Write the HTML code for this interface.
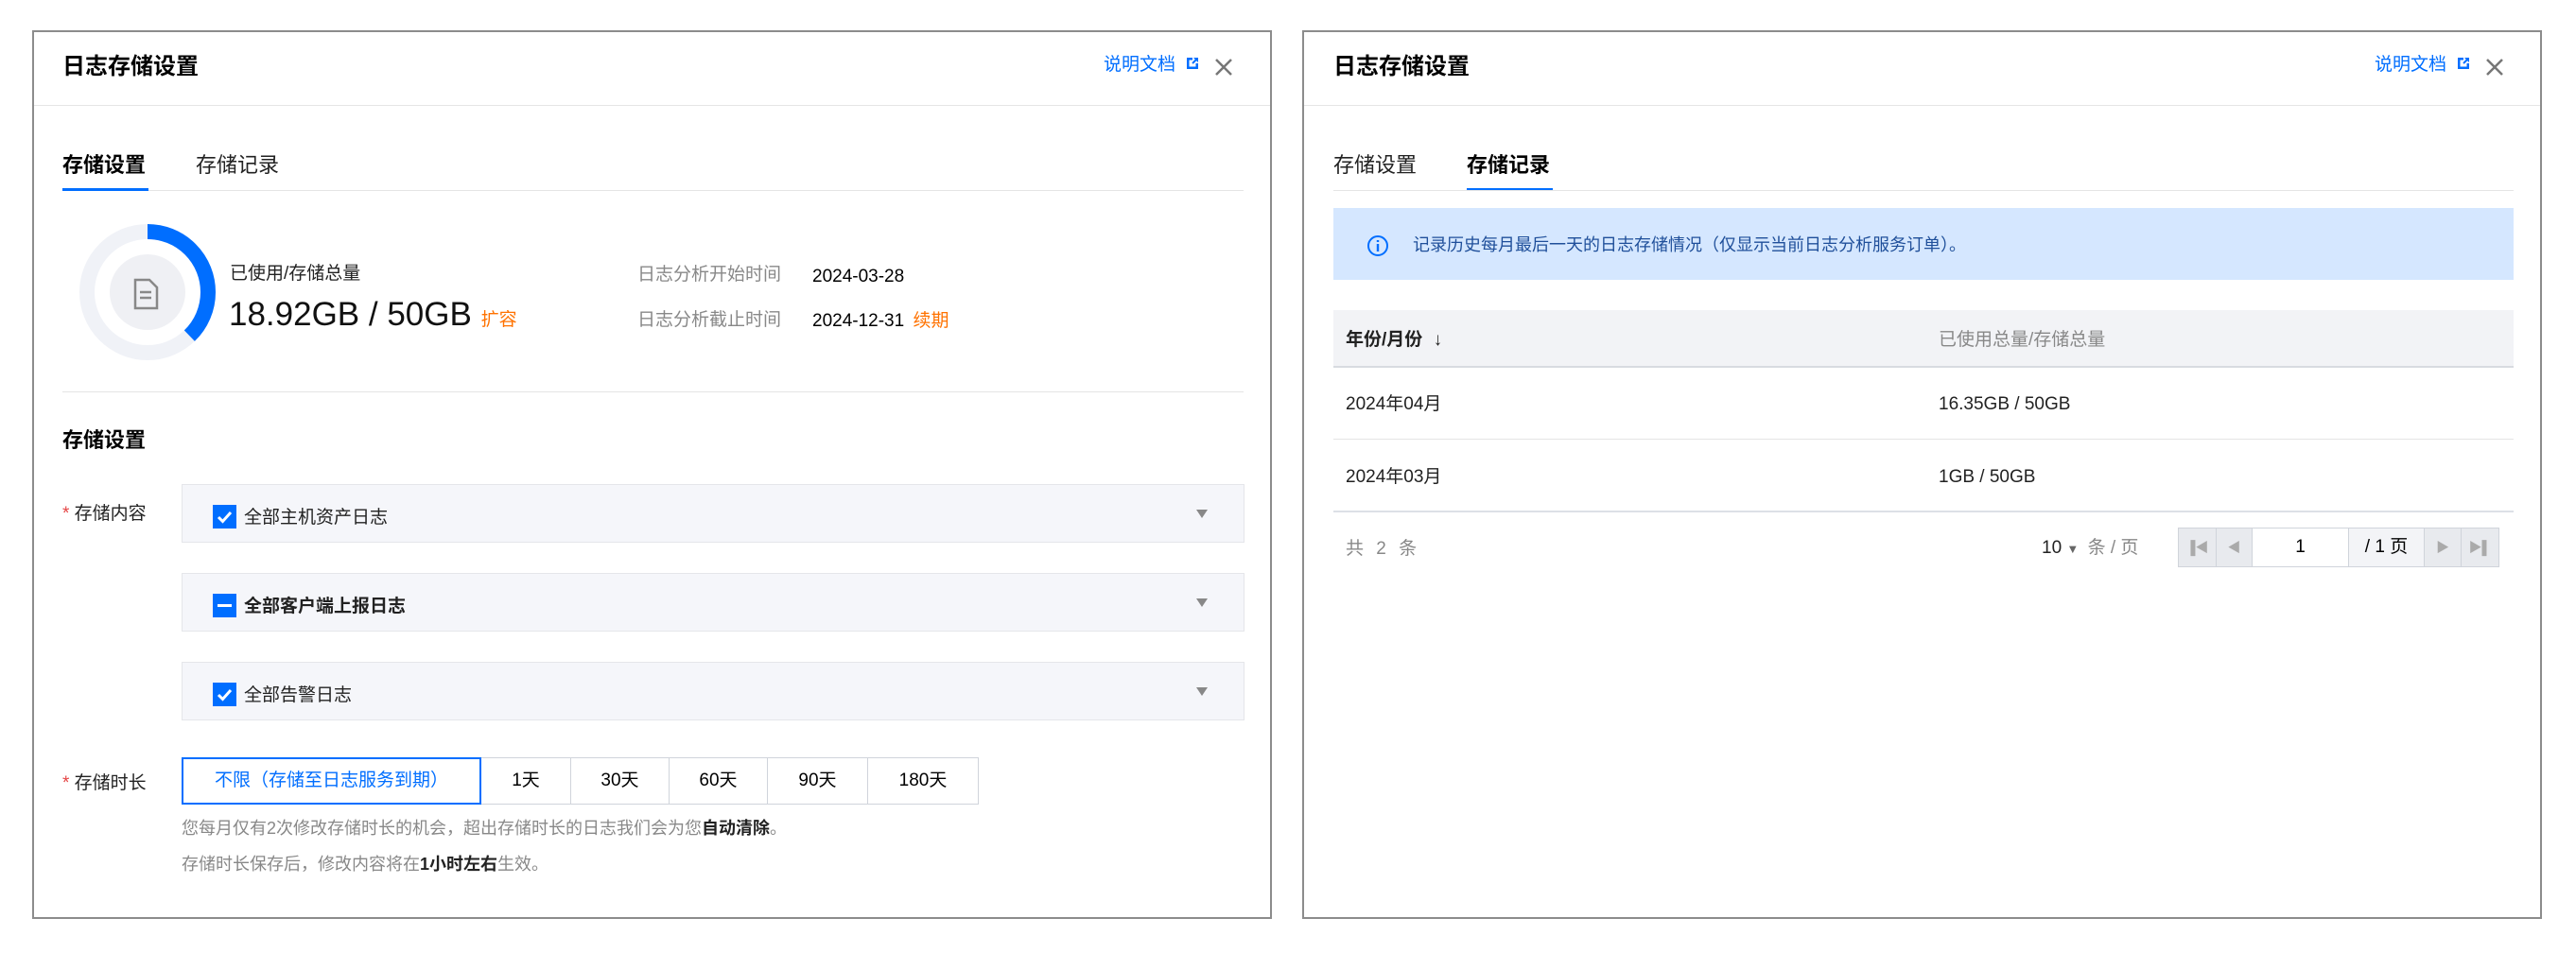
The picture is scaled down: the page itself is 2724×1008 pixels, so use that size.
<!DOCTYPE html>
<html><head><meta charset="utf-8"><style>
*{box-sizing:border-box;margin:0;padding:0}
body{width:2724px;height:1008px;background:#fff;position:relative;overflow:hidden;font-family:"Liberation Sans","Noto Sans CJK SC",sans-serif;color:#000;line-height:1.15}
.a{position:absolute;white-space:nowrap}
.s{margin-top:3px}
.panel{position:absolute;top:32px;width:1311px;height:940px;border:2px solid #8c8c8c;background:#fff}
.t{font-size:24px;font-weight:bold;color:#000}
.link{color:#006eff;font-size:19px}
.f19{font-size:19px}
.gray{color:#888}
.box{position:absolute;left:156px;width:1124px;height:62px;background:#f5f6fa;border:1px solid #e5e6ea}
.cb{position:absolute;left:32px;top:21px;width:25px;height:25px;background:#006eff}
.box .lbl{position:absolute;left:65px;top:24px;font-size:19px;color:#222}
.arr{position:absolute;right:38px;top:26px;width:0;height:0;border-left:6px solid transparent;border-right:6px solid transparent;border-top:9px solid #888}
.seg{position:absolute;top:767px;height:50px;border:1px solid #d0d4db;font-size:19px;text-align:center;line-height:48px;color:#000}
.pg{position:absolute;top:524px;height:42px;border:1px solid #d0d4db;background:#e8eaee;text-align:center;line-height:40px;font-size:19px}
</style></head><body>

<!-- LEFT PANEL -->
<div class="panel" style="left:34px">
  <div class="a t" style="left:30px;top:23px">日志存储设置</div>
  <div class="a link" style="left:1131px;top:24px">说明文档</div>
  <svg class="a" style="left:1217px;top:25px" width="16" height="16" viewBox="0 0 16 16"><path d="M2 2h6v2.5H4.5v7h7V8H14v6H2z" fill="#006eff"/><path d="M9 2h5v5l-1.8-1.8-3.5 3.5-1.4-1.4 3.5-3.5z" fill="#006eff"/></svg>
  <svg class="a" style="left:1248px;top:27px" width="20" height="20" viewBox="0 0 20 20"><path d="M2 2L18 18M18 2L2 18" stroke="#777" stroke-width="2.5"/></svg>
  <div class="a" style="left:0;top:77px;width:1307px;height:1px;background:#e5e5e5"></div>

  <div class="a t s" style="left:30px;top:125px;font-size:22px">存储设置</div>
  <div class="a s" style="left:171px;top:125px;font-size:22px;color:#222">存储记录</div>
  <div class="a" style="left:30px;top:165px;width:91px;height:3px;background:#006eff"></div>
  <div class="a" style="left:121px;top:167px;width:1158px;height:1px;background:#e5e5e5"></div>

  <svg class="a" style="left:45px;top:200px" width="150" height="150" viewBox="0 0 150 150">
    <circle cx="75" cy="75" r="64" fill="none" stroke="#f0f2f7" stroke-width="16"/>
    <circle cx="75" cy="75" r="64" fill="none" stroke="#006eff" stroke-width="16" stroke-dasharray="152 400" transform="rotate(-90 75 75)"/>
    <circle cx="75" cy="75" r="40" fill="#eff0f4"/>
    <path d="M62 62h15l8 8v22H62z" fill="none" stroke="#888" stroke-width="2.5"/>
    <path d="M67 75h12M67 81h12" stroke="#888" stroke-width="2.5"/>
  </svg>
  <div class="a f19 s" style="left:207px;top:242px;color:#222">已使用/存储总量</div>
  <div class="a s" style="left:206px;top:276px;font-size:35px;color:#111">18.92GB / 50GB <span style="font-size:19px;color:#ff7200">扩容</span></div>
  <div class="a f19 gray s" style="left:638px;top:243px">日志分析开始时间</div>
  <div class="a f19 s" style="left:823px;top:245px">2024-03-28</div>
  <div class="a f19 gray s" style="left:638px;top:291px">日志分析截止时间</div>
  <div class="a f19 s" style="left:823px;top:292px">2024-12-31 <span style="color:#ff7200;margin-left:4px">续期</span></div>
  <div class="a" style="left:30px;top:380px;width:1249px;height:1px;background:#e5e5e5"></div>

  <div class="a t s" style="left:30px;top:416px;font-size:22px">存储设置</div>
  <div class="a f19 s" style="left:30px;top:496px;color:#222"><span style="color:#e54545">*</span> 存储内容</div>

  <div class="box" style="top:478px"><div class="cb"><svg width="25" height="25" viewBox="0 0 25 25"><path d="M6 13l4.5 4.5L19 8" fill="none" stroke="#fff" stroke-width="3"/></svg></div><div class="lbl">全部主机资产日志</div><div class="arr"></div></div>
  <div class="box" style="top:572px"><div class="cb"><div style="position:absolute;left:5px;top:11px;width:15px;height:3px;background:#fff"></div></div><div class="lbl" style="font-weight:bold">全部客户端上报日志</div><div class="arr"></div></div>
  <div class="box" style="top:666px"><div class="cb"><svg width="25" height="25" viewBox="0 0 25 25"><path d="M6 13l4.5 4.5L19 8" fill="none" stroke="#fff" stroke-width="3"/></svg></div><div class="lbl">全部告警日志</div><div class="arr"></div></div>

  <div class="a f19" style="left:30px;top:784px;color:#222"><span style="color:#e54545">*</span> 存储时长</div>
  <div class="seg" style="left:156px;width:317px;border:2px solid #006eff;color:#006eff;line-height:46px;z-index:2">不限（存储至日志服务到期）</div>
  <div class="seg" style="left:472px;width:96px">1天</div>
  <div class="seg" style="left:567px;width:105px">30天</div>
  <div class="seg" style="left:671px;width:105px">60天</div>
  <div class="seg" style="left:775px;width:107px">90天</div>
  <div class="seg" style="left:881px;width:118px">180天</div>
  <div class="a s" style="left:156px;top:829px;font-size:18px;color:#888">您每月仅有2次修改存储时长的机会，超出存储时长的日志我们会为您<b style="color:#222">自动清除</b>。</div>
  <div class="a s" style="left:156px;top:867px;font-size:18px;color:#888">存储时长保存后，修改内容将在<b style="color:#222">1小时左右</b>生效。</div>
</div>

<!-- RIGHT PANEL -->
<div class="panel" style="left:1377px">
  <div class="a t" style="left:31px;top:23px">日志存储设置</div>
  <div class="a link" style="left:1132px;top:24px">说明文档</div>
  <svg class="a" style="left:1218px;top:25px" width="16" height="16" viewBox="0 0 16 16"><path d="M2 2h6v2.5H4.5v7h7V8H14v6H2z" fill="#006eff"/><path d="M9 2h5v5l-1.8-1.8-3.5 3.5-1.4-1.4 3.5-3.5z" fill="#006eff"/></svg>
  <svg class="a" style="left:1249px;top:27px" width="20" height="20" viewBox="0 0 20 20"><path d="M2 2L18 18M18 2L2 18" stroke="#777" stroke-width="2.5"/></svg>
  <div class="a" style="left:0;top:77px;width:1307px;height:1px;background:#e5e5e5"></div>

  <div class="a s" style="left:31px;top:125px;font-size:22px;color:#222">存储设置</div>
  <div class="a t s" style="left:172px;top:125px;font-size:22px">存储记录</div>
  <div class="a" style="left:172px;top:165px;width:91px;height:3px;background:#006eff"></div>
  <div class="a" style="left:31px;top:167px;width:1248px;height:1px;background:#e5e5e5"></div>

  <div class="a" style="left:31px;top:186px;width:1248px;height:76px;background:#d5e7ff"></div>
  <svg class="a" style="left:66px;top:214px" width="24" height="24" viewBox="0 0 24 24"><circle cx="12" cy="12" r="10" fill="none" stroke="#006eff" stroke-width="2"/><path d="M12 10v8M12 6v2" stroke="#006eff" stroke-width="2.4"/></svg>
  <div class="a" style="left:115px;top:215px;font-size:18px;color:#1f4f9a">记录历史每月最后一天的日志存储情况（仅显示当前日志分析服务订单）。</div>

  <div class="a" style="left:31px;top:294px;width:1248px;height:61px;background:#f2f3f6;border-bottom:2px solid #d8dbe0"></div>
  <div class="a" style="left:44px;top:315px;font-size:19px;font-weight:bold;color:#222">年份/月份 <span style="font-weight:normal;margin-left:6px">↓</span></div>
  <div class="a f19 gray" style="left:671px;top:315px">已使用总量/存储总量</div>
  <div class="a f19" style="left:44px;top:383px;color:#222">2024年04月</div>
  <div class="a f19" style="left:671px;top:383px;color:#222">16.35GB / 50GB</div>
  <div class="a" style="left:31px;top:430px;width:1248px;height:1px;background:#e5e5e5"></div>
  <div class="a f19" style="left:44px;top:460px;color:#222">2024年03月</div>
  <div class="a f19" style="left:671px;top:460px;color:#222">1GB / 50GB</div>
  <div class="a" style="left:31px;top:506px;width:1248px;height:2px;background:#dde0e6"></div>

  <div class="a f19 gray" style="left:44px;top:536px;letter-spacing:4px">共 2 条</div>
  <div class="a f19" style="left:780px;top:535px;color:#222">10 <span style="font-size:13px;color:#666">▼</span> <span style="color:#888;margin-left:4px">条 / 页</span></div>
  <div class="pg" style="left:924px;width:41px;color:#aaa;font-size:14px">▐◀</div>
  <div class="pg" style="left:964px;width:39px;color:#aaa;font-size:14px">◀</div>
  <div class="pg" style="left:1002px;width:103px;background:#fff">1</div>
  <div class="pg" style="left:1104px;width:81px;background:#f3f4f7">/ 1 页</div>
  <div class="pg" style="left:1184px;width:40px;color:#aaa;font-size:14px">▶</div>
  <div class="pg" style="left:1223px;width:41px;color:#aaa;font-size:14px">▶▌</div>
</div>
</body></html>
